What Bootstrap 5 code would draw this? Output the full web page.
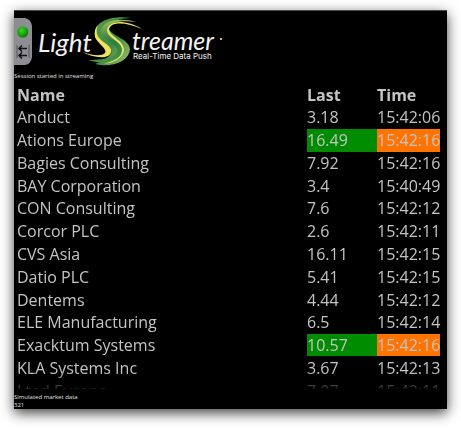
<!DOCTYPE html>
<html lang="en">
<head>
<meta charset="utf-8">
<meta name="viewport" content="width=device-width, initial-scale=1">
<title>Lightstreamer</title>
<link href="https://cdn.jsdelivr.net/npm/bootstrap@5.3.0/dist/css/bootstrap.min.css" rel="stylesheet">
<style>
body { font-family: "Open Sans", "Noto Sans", sans-serif; background: #fff; padding: 10px 14px 18px; }
.screen { background: #000; color: #c4c4c4; border-top: 1px solid #4a4d4d; box-shadow: 0 4px 12px rgba(0,0,0,.75); }
.brand { height: 61px; }
.brand svg { display: block; }
.note { font-size: 6px; line-height: 8px; color: #e0e0e0; }
.board { height: 305px; margin-top: 4px; overflow: hidden; padding: 0 7px 0 3px;
  -webkit-mask-image: linear-gradient(#000 288px, transparent 308px); mask-image: linear-gradient(#000 288px, transparent 308px); }
.quotes { width: 100%; height: 318px; font-size: 16px; line-height: 22px; table-layout: fixed; }
.quotes th, .quotes td { padding: 0; white-space: nowrap; }
.c-last { width: 70px; }
.c-time { width: 63px; }
.up { background: #008c00; }
.fresh { background: #ff7400; }
</style>
<script src="https://cdn.jsdelivr.net/npm/bootstrap@5.3.0/dist/js/bootstrap.bundle.min.js"></script>
</head>
<body>
<main class="screen d-flex flex-column">
  <header class="brand">
    <svg width="216" height="60" viewBox="14 11 216 60" role="img" aria-label="Lightstreamer, Real-Time Data Push">
      <defs>
        <radialGradient id="led" cx=".4" cy=".35" r=".7"><stop offset="0" stop-color="#3fd427"/><stop offset=".6" stop-color="#14a408"/><stop offset="1" stop-color="#0a6d05"/></radialGradient>
        <linearGradient id="ribbon" x1="0" y1="0" x2="1" y2="1"><stop offset="0" stop-color="#5d9a45"/><stop offset=".5" stop-color="#3a8743"/><stop offset="1" stop-color="#a5c973"/></linearGradient>
        <linearGradient id="core" x1="0" y1="0" x2="0" y2="1"><stop offset="0" stop-color="#9cc05a"/><stop offset=".5" stop-color="#2f7d40"/><stop offset="1" stop-color="#4b9447"/></linearGradient>
      </defs>
      <path d="M14 18H25Q31 19 32 26V57Q31 64 25 65H14Z" fill="#8d8d92"/>
      <circle cx="22.700" cy="32" r="5.600" fill="url(#led)"/>
      <path d="M17 45V58M29 45V58" stroke="#55555a" fill="none"/>
      <path d="M19 48.500H27M22 45.500L19 48.500L22 51.500M19 55.500H27M22 52.500L19 55.500L22 58.500" stroke="#111" stroke-width="1.500" fill="none"/>
      <path d="M132 18C112 15 96 21 95 32C94 42 105 45 111 50C113 54 107 59 95 64C111 68 129 62 130 49C129 39 112 36 109 29C108 22 118 18 132 18Z" fill="url(#ribbon)"/>
      <path d="M142 29C126 22 110 21 109 30C111 37 125 41 124 51C122 59 113 63 104 64C117 60 121 55 119 48C117 42 105 38 105 30C106 20 127 19 142 29Z" fill="#e9df62"/>
      <path d="M137 22C118 17 102 21 101 31C101 39 113 42 117 49C119 56 108 60 88 60C106 66 123 60 122 49C121 41 107 38 107 30C108 22 121 20 137 22Z" fill="url(#core)"/>
      <path d="M98 25C94 34 99 39 105 43C111 47 114 52 108 56C101 59 90 56 82 52C91 55 101 57 105 53C108 49 97 43 95 37C94 32 95 28 98 25Z" fill="#f0e25a"/>
      <g fill="#f2f2f2" font-family="Lato, sans-serif">
        <text x="38" y="52" font-size="26" font-style="italic">Light</text>
        <text x="132" y="50" font-size="25" font-style="italic">treamer</text>
        <text x="133" y="59" font-size="8" font-family="Inter, sans-serif">Real-Time Data Push</text>
        <circle cx="221" cy="39" r="1"/>
      </g>
    </svg>
  </header>
  <div class="note">Session started in streaming</div>
  <div class="board">
    <table class="quotes">
      <colgroup><col><col class="c-last"><col class="c-time"></colgroup>
      <thead><tr><th scope="col">Name</th><th scope="col">Last</th><th scope="col">Time</th></tr></thead>
      <tbody>
        <tr><td>Anduct</td><td>3.18</td><td>15:42:06</td></tr>
        <tr><td>Ations Europe</td><td class="up">16.49</td><td class="fresh">15:42:16</td></tr>
        <tr><td>Bagies Consulting</td><td>7.92</td><td>15:42:16</td></tr>
        <tr><td>BAY Corporation</td><td>3.4</td><td>15:40:49</td></tr>
        <tr><td>CON Consulting</td><td>7.6</td><td>15:42:12</td></tr>
        <tr><td>Corcor PLC</td><td>2.6</td><td>15:42:11</td></tr>
        <tr><td>CVS Asia</td><td>16.11</td><td>15:42:15</td></tr>
        <tr><td>Datio PLC</td><td>5.41</td><td>15:42:15</td></tr>
        <tr><td>Dentems</td><td>4.44</td><td>15:42:12</td></tr>
        <tr><td>ELE Manufacturing</td><td>6.5</td><td>15:42:14</td></tr>
        <tr><td>Exacktum Systems</td><td class="up">10.57</td><td class="fresh">15:42:16</td></tr>
        <tr><td>KLA Systems Inc</td><td>3.67</td><td>15:42:13</td></tr>
        <tr><td>Lted Europe</td><td>7.07</td><td>15:42:11</td></tr>
      </tbody>
    </table>
  </div>
  <footer class="note pt-1">Simulated market data<br>321</footer>
</main>
</body>
</html>
